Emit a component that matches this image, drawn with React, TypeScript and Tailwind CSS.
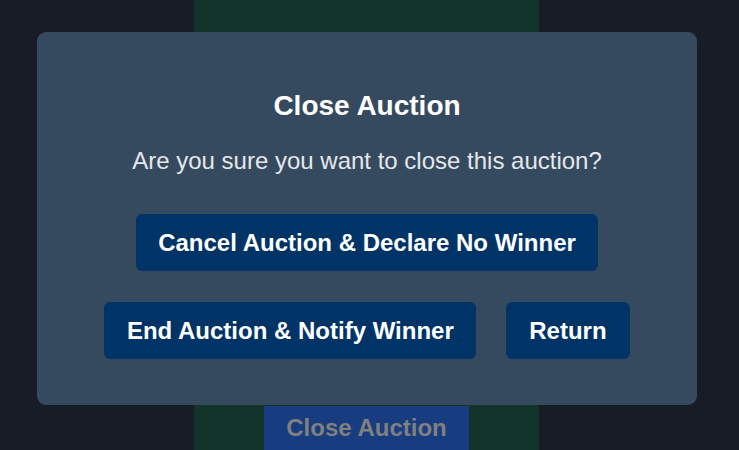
import React from "react";

export default function App() {
  return (
    <div
      className="relative min-h-screen h-[450px] overflow-hidden bg-[#171c26]"
      style={{ fontFamily: '"Liberation Sans", Arial, sans-serif' }}
    >
      <div className="ml-[194px] w-[345px] h-full bg-[#13342a] flex flex-col items-center">
        <button className="mt-[406px] h-[57px] px-[22px] bg-[#173c80] text-[#808080] text-[24px] font-bold leading-none">
          Close Auction
        </button>
      </div>

      <div className="absolute left-[37px] top-[32px] w-[660px] rounded-[9px] bg-[#364a5f] pt-[58px] pb-[46px] flex flex-col items-center">
        <h2 className="text-[28px] leading-[32px] font-bold text-white">Close Auction</h2>
        <p className="mt-[23px] text-[24px] leading-[32px] text-[#e5e7eb]">
          Are you sure you want to close this auction?
        </p>
        <button className="mt-[37px] h-[57px] px-[22.5px] rounded-[6px] bg-[#003366] text-white text-[24px] font-bold leading-none">
          Cancel Auction &amp; Declare No Winner
        </button>
        <div className="mt-[31px] flex gap-[30px]">
          <button className="h-[57px] px-[22.5px] rounded-[6px] bg-[#003366] text-white text-[24px] font-bold leading-none">
            End Auction &amp; Notify Winner
          </button>
          <button className="h-[57px] px-[23px] rounded-[6px] bg-[#003366] text-white text-[24px] font-bold leading-none">
            Return
          </button>
        </div>
      </div>
    </div>
  );
}
